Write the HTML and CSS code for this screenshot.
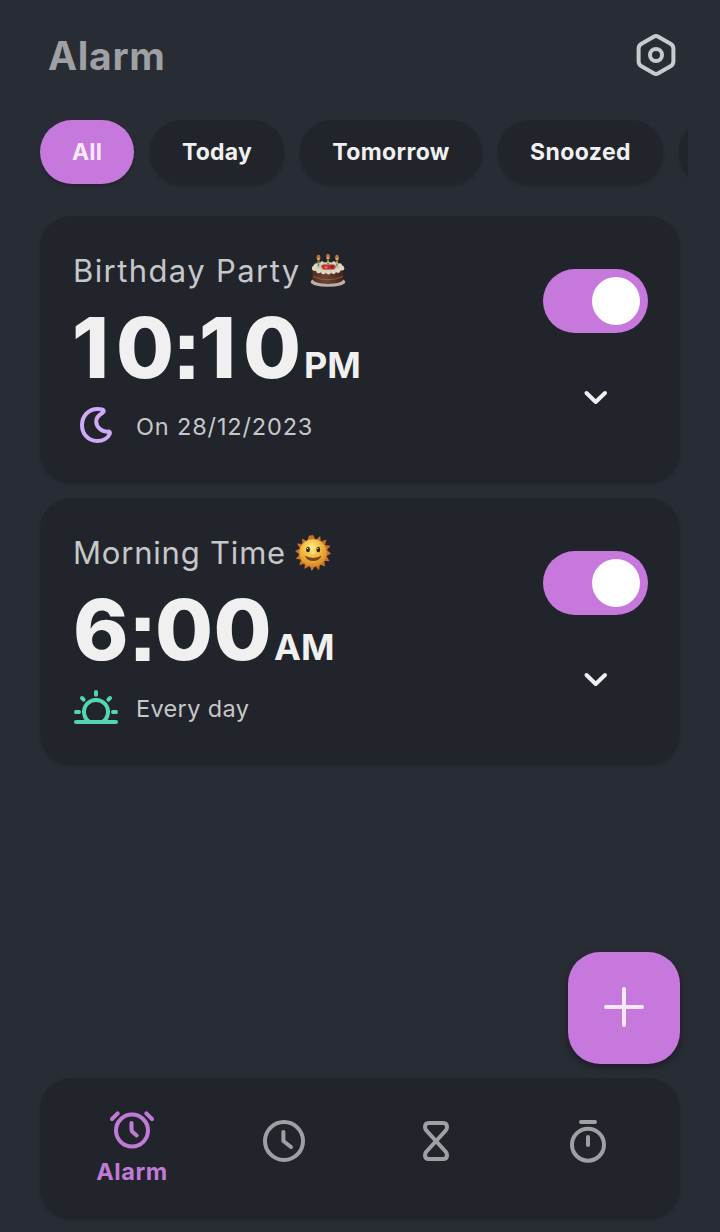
FILE: index.html
```html
<!DOCTYPE html>
<html lang="en">
<head>
<meta charset="utf-8">
<title>Alarm</title>
<link rel="stylesheet" href="styles.css">
</head>
<body>
<svg width="0" height="0" class="defs" aria-hidden="true">
  <defs>
    <radialGradient id="sunFace" cx=".45" cy=".3" r=".7">
      <stop offset="0" stop-color="#ffec8a"/><stop offset=".5" stop-color="#f0bb3f"/><stop offset="1" stop-color="#d9882a"/>
    </radialGradient>
    <linearGradient id="cakeSide" x1="0" x2="1">
      <stop offset="0" stop-color="#4f2c20"/><stop offset=".4" stop-color="#704330"/><stop offset="1" stop-color="#41231b"/>
    </linearGradient>
  </defs>
</svg>
<div class="app">
  <header class="header">
    <h1 class="title">Alarm</h1>
    <svg class="icon settings" viewBox="0 0 48 48">
      <path d="M21.7 5.8Q24 4.2 26.3 5.8L38.5 12.8Q41.4 14.5 41.4 17.5V30.5Q41.4 33.5 38.5 35.2L26.3 42.2Q24 43.8 21.7 42.2L9.5 35.2Q6.6 33.5 6.6 30.5V17.5Q6.6 14.5 9.5 12.8Z"/>
      <circle cx="24" cy="24" r="6"/>
    </svg>
  </header>
  <nav class="chips">
    <span class="chip chip-all active">All</span>
    <span class="chip chip-today">Today</span>
    <span class="chip chip-tomorrow">Tomorrow</span>
    <span class="chip chip-snoozed">Snoozed</span>
    <span class="chip chip-next"></span>
  </nav>
  <main class="list">
    <section class="card">
      <div class="info">
        <div class="name"><span class="label birthday">Birthday Party</span>
          <svg class="emoji" viewBox="0 0 36 36">
            <ellipse cx="18" cy="29" rx="17.3" ry="4.8" fill="#bcaea7"/>
            <path d="M2.5 16V26C4 32.5 32 32.5 33.5 26V16Z" fill="url(#cakeSide)"/>
            <path d="M3 23.5Q18 30 33 23.5" fill="none" stroke="#8d6653" stroke-width=".8"/>
            <ellipse cx="18" cy="14.5" rx="15.5" ry="5.6" fill="#cfc8a4"/>
            <g fill="#ded8c5"><circle cx="4.3" cy="15.5" r="2.4"/><circle cx="8.6" cy="17.9" r="2.4"/><circle cx="13.5" cy="19" r="2.3"/><circle cx="18.5" cy="19.3" r="2.3"/><circle cx="23.5" cy="18.8" r="2.3"/><circle cx="28" cy="17.6" r="2.4"/><circle cx="32" cy="15.2" r="2.3"/><circle cx="6" cy="12" r="1.8"/><circle cx="12" cy="10" r="1.8"/><circle cx="24" cy="10" r="1.8"/><circle cx="30" cy="12" r="1.8"/></g>
            <path d="M11 13L13 11.5H24L26 13.5L24 16.5H13Z" fill="#bd3036"/>
            <circle cx="16" cy="14.2" r="1.5" fill="#e9636a"/><circle cx="22" cy="14" r="1.4" fill="#852026"/>
            <g stroke="#a7b77a" stroke-width="2"><path d="M8.5 8V14M18 7V11M27 8V14"/></g>
            <g stroke="#557447" stroke-width="1" stroke-dasharray="1.5 1.5"><path d="M8.5 8V14M18 7V11M27 8V14"/></g>
            <g fill="#bd7236"><ellipse cx="8.5" cy="4.8" rx="1.9" ry="3"/><ellipse cx="18" cy="3.8" rx="1.9" ry="3"/><ellipse cx="27" cy="4.8" rx="1.9" ry="3"/></g>
            <g fill="#efbd70"><circle cx="8.5" cy="6" r="1"/><circle cx="18" cy="5" r="1"/><circle cx="27" cy="6" r="1"/></g>
          </svg>
        </div>
        <div class="time"><div class="digits"><span class="ten"><span class="one">1</span>0</span><span class="colon">:</span><span class="minute-ten"><span class="one">1</span>0</span></div><span class="period">PM</span></div>
        <div class="repeat">
          <svg class="icon moon" viewBox="0 0 48 48"><path d="M25.5 7C16.5 7 10 14 10 23C10 32.3 16.5 39 25 39C31 39 36 36 37.8 31.7C38.3 30.2 37.3 29.3 36 29.6C29.6 30 24.2 25.3 24.2 19.2C24.2 15.5 26.5 13 31 10.4C32.5 9 31.5 7.8 30 7.4C28.7 7.1 27 7 25.5 7Z"/></svg>
          <span class="date">On 28/12/2023</span>
        </div>
      </div>
      <div class="controls">
        <div class="switch"><span class="knob"></span></div>
        <svg class="icon chevron" viewBox="0 0 48 48"><path d="M14.5 20L23.7 29L33 20"/></svg>
      </div>
    </section>
    <section class="card">
      <div class="info">
        <div class="name"><span class="label morning">Morning Time</span>
          <svg class="emoji" viewBox="0 0 36 36">
            <path d="M18 0L20.8 5L25.2 1L25.8 6.5L31.5 4.5L30 10L35.5 10.8L32 15L36 18.5L31.5 21L34.5 26L29.3 26L30 31.5L25 29.5L24 35.2L20.2 31L16.8 36L14.6 31L9.5 34L9.7 28.8L4.3 30L6 24.8L.8 23.8L4.5 19.5L0 16L5 13.5L2 8.5L7.4 9L7 3.5L12 6L14 .8Z" fill="#c87325"/>
            <circle cx="18" cy="18" r="13.7" fill="url(#sunFace)"/>
            <g fill="#302319"><ellipse cx="13" cy="14.5" rx="1.9" ry="2.7"/><ellipse cx="23.3" cy="14.5" rx="1.9" ry="2.7"/></g>
            <circle cx="12.5" cy="13.4" r=".6" fill="#fff"/><circle cx="22.8" cy="13.4" r=".6" fill="#fff"/>
            <ellipse cx="18.2" cy="18" rx="1.8" ry="1.1" fill="#ffe183"/>
            <path d="M9.8 20.8Q18 25 26.7 20.8Q24.2 26 18 26Q12 26 9.8 20.8Z" fill="#7d431e"/>
          </svg>
        </div>
        <div class="time"><div class="digits"><span class="six">6</span><span class="colon">:</span><span class="minute-zero">00</span></div><span class="period">AM</span></div>
        <div class="repeat">
          <svg class="icon sunrise" viewBox="0 0 48 48"><path d="M4 38H44M17.5 38A12 12 0 1 1 30.5 38M24 8V10.7M4 28H7M41 28H44M10 14L11.6 15.6M38 14L36.4 15.6"/></svg>
          <span class="every">Every day</span>
        </div>
      </div>
      <div class="controls">
        <div class="switch"><span class="knob"></span></div>
        <svg class="icon chevron" viewBox="0 0 48 48"><path d="M14.5 20L23.7 29L33 20"/></svg>
      </div>
    </section>
  </main>
  <div class="actions">
    <button class="add" aria-label="Add alarm"><svg class="icon" viewBox="0 0 48 48"><path d="M24 5V41M6 23H42"/></svg></button>
  </div>
  <nav class="tabs">
    <div class="tab selected">
      <svg class="icon" viewBox="0 0 48 48"><circle cx="24" cy="24.6" r="16"/><path d="M23.5 17V23.5Q23.5 25 24.6 26L28.7 29.5M4 13L9.7 7.3M38.3 7.3L44 13"/></svg>
      <span class="tab-label">Alarm</span>
    </div>
    <div class="tab"><svg class="icon" viewBox="0 0 48 48"><circle cx="24" cy="24" r="19"/><path d="M23.4 15V24L31 30"/></svg></div>
    <div class="tab"><svg class="icon" viewBox="0 0 48 48"><path d="M17 6H31Q35 6 35 10Q35 12 33.5 13.7L14.5 34.5Q13 36 13 38Q13 42 17 42H31Q35 42 35 38Q35 36 33.5 34.5L14.5 13.7Q13 12 13 10Q13 6 17 6Z"/></svg></div>
    <div class="tab"><svg class="icon" viewBox="0 0 48 48"><circle cx="24" cy="27.7" r="16"/><path d="M17 5H31M24 20V28"/></svg></div>
  </nav>
</div>
</body>
</html>
```
FILE: styles.css
```css
* { box-sizing: border-box; }
body {
  margin: 0;
  background: #282c34;
  color: #f0f0f0;
  font-family: Inter, "Noto Sans", sans-serif;
}
.defs { display: block; }
.app {
  width: 720px;
  height: 1232px;
  padding: 0 40px 14px;
  display: flex;
  flex-direction: column;
  overflow: hidden;
}
.icon {
  width: 48px;
  height: 48px;
  flex: none;
  display: block;
  fill: none;
  stroke: currentColor;
  stroke-width: 4;
  stroke-linecap: round;
  stroke-linejoin: round;
}
.header {
  height: 120px;
  padding: 31px 0 0 8px;
  display: flex;
  justify-content: space-between;
  align-items: flex-start;
}
.title {
  margin: 0;
  font-size: 39px;
  line-height: 50px;
  font-weight: 700;
  letter-spacing: .7px;
  color: #9fa0a4;
}
.settings { color: #c9cacd; }
.chips {
  display: flex;
  gap: 16px;
  height: 80px;
  margin-right: -8px;
  margin-left: -8px;
  padding-left: 8px;
  overflow: hidden;
  flex: none;
}
.chip {
  flex: none;
  height: 64px;
  line-height: 64px;
  border-radius: 32px;
  background: #21242b;
  box-shadow: 0 2px 3px rgba(20, 22, 28, .35);
  text-align: center;
  font-size: 23px;
  font-weight: 650;
  letter-spacing: .2px;
}
.chip-all { width: 94px; }
.chip-today { width: 134px; }
.chip-tomorrow { width: 182px; letter-spacing: .4px; }
.chip-snoozed { width: 165px; letter-spacing: .4px; }
.chip-next { width: 120px; }
.active { background: #c678dd; color: #f7e8fb; }
.list {
  margin-top: 16px;
  display: flex;
  flex-direction: column;
  gap: 16px;
}
.card {
  height: 266px;
  padding: 32px;
  border-radius: 32px;
  background: #21242b;
  box-shadow: 0 2px 3px rgba(20, 22, 28, .35);
  display: flex;
  justify-content: space-between;
}
.name {
  height: 46px;
  padding-left: 1px;
  display: flex;
  align-items: center;
  gap: 9px;
  font-size: 31px;
  color: #c6c7c9;
}
.label { white-space: nowrap; margin-top: -2px; }
.birthday { letter-spacing: 1.4px; }
.morning { letter-spacing: .8px; }
.emoji { width: 36px; height: 36px; }
.time {
  height: 108px;
  line-height: 108px;
  display: flex;
  align-items: baseline;
  white-space: nowrap;
}
.digits {
  display: flex;
  align-items: baseline;
  font-size: 84px;
  font-weight: 850;
}
.one { letter-spacing: 7px; }
.ten { width: 104px; }
.six { width: 60px; padding-left: 1px; }
.colon {
  width: 20px;
  font-family: "Liberation Sans", sans-serif;
  font-size: 82px;
  line-height: 106px;
  font-weight: 700;
  letter-spacing: -7px;
  text-indent: -3px;
  -webkit-text-stroke: 2px currentColor;
}
.minute-ten { width: 108px; padding-left: 3px; }
.minute-zero { width: 122px; padding-left: 3px; letter-spacing: .5px; }
.period { font-size: 36px; font-weight: 750; }
.repeat {
  height: 48px;
  display: flex;
  align-items: center;
  gap: 16px;
  font-size: 23.5px;
  color: #c6c7c9;
}
.date { letter-spacing: .85px; }
.every { letter-spacing: .35px; }
.moon { color: #cfaaf7; }
.sunrise { color: #56d5b5; }
.controls {
  width: 105px;
  padding-top: 21px;
  display: flex;
  flex-direction: column;
  align-items: center;
  gap: 40px;
}
.switch {
  width: 105px;
  height: 64px;
  padding: 8px;
  border-radius: 32px;
  background: #c678dd;
  display: flex;
  justify-content: flex-end;
}
.knob { width: 48px; height: 48px; border-radius: 50%; background: #fff; }
.actions {
  margin-top: auto;
  margin-bottom: 14px;
  display: flex;
  justify-content: flex-end;
}
.add {
  width: 112px;
  height: 112px;
  padding: 0;
  border: 0;
  border-radius: 32px;
  background: #c678dd;
  color: #f7e8fb;
  box-shadow: 0 3px 6px rgba(15, 17, 22, .55);
  display: grid;
  place-items: center;
}
.tabs {
  height: 140px;
  flex: none;
  padding: 0 16px;
  border-radius: 32px;
  background: #21242b;
  box-shadow: 0 2px 3px rgba(20, 22, 28, .35);
  display: grid;
  grid-template-columns: repeat(4, 1fr);
}
.tab {
  padding-top: 39px;
  display: flex;
  flex-direction: column;
  align-items: center;
  color: #9fa0a4;
}
.selected { padding-top: 28px; color: #c07bd7; }
.tab-label {
  margin-top: 3px;
  font-size: 23.5px;
  line-height: 30px;
  font-weight: 650;
  letter-spacing: .6px;
}
```
